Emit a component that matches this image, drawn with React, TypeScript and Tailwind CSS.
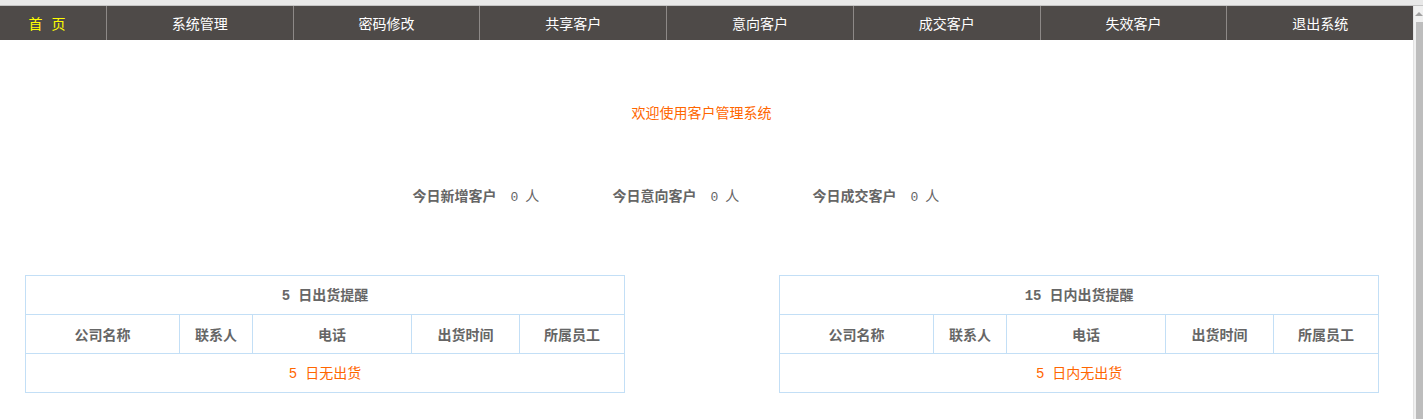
import React from 'react';

const NAV = ['系统管理', '密码修改', '共享客户', '意向客户', '成交客户', '失效客户', '退出系统'];

const STATS = [
  { label: '今日新增客户', value: 0 },
  { label: '今日意向客户', value: 0 },
  { label: '今日成交客户', value: 0 },
];

const COLS = [
  { name: '公司名称', w: 'w-[154px]' },
  { name: '联系人', w: 'w-[73px]' },
  { name: '电话', w: 'w-[159px]' },
  { name: '出货时间', w: 'w-[108px]' },
  { name: '所属员工', w: 'w-[105px]' },
];

const font = { fontFamily: '"Noto Sans CJK SC", "Liberation Sans", sans-serif' };

const RemindTable: React.FC<{ days: string; title: string; empty: string }> = ({ days, title, empty }) => (
  <table className="w-[599px] table-fixed border-collapse text-[14px] text-[#666666]">
    <colgroup>
      {COLS.map((c) => (
        <col key={c.name} className={c.w} />
      ))}
    </colgroup>
    <tbody>
      <tr className="h-[39px]">
        <td colSpan={5} className="border border-[#c3dff6] text-center font-bold">
          <span className="mr-[8px] font-['Liberation_Mono',monospace]">{days}</span>
          {title}
        </td>
      </tr>
      <tr className="h-[39px]">
        {COLS.map((c) => (
          <td key={c.name} className="border border-[#c3dff6] text-center font-bold">
            {c.name}
          </td>
        ))}
      </tr>
      <tr className="h-[39px]">
        <td colSpan={5} className="border border-[#c3dff6] text-center text-[#ff6600]">
          <span className="mr-[8px] font-['Liberation_Mono',monospace]">5</span>
          {empty}
        </td>
      </tr>
    </tbody>
  </table>
);

export default function App() {
  return (
    <div className="w-[1423px] h-[419px] overflow-hidden bg-white flex flex-col" style={font}>
      {/* browser chrome edge */}
      <div className="h-[6px] shrink-0 bg-[#e8e8e8] border-b border-[#c4c4c4]" />

      <div className="flex flex-1 min-h-0">
        <div className="flex-1 flex flex-col">
          {/* nav */}
          <div className="h-[34px] shrink-0 flex bg-[#4e4a48] text-[14px] text-white">
            <div className="w-[106px] flex items-center justify-center gap-[9px] pr-[12px] text-[#ffff00]">
              <span>首</span>
              <span>页</span>
            </div>
            {NAV.map((n) => (
              <div
                key={n}
                className="flex-1 flex items-center justify-center border-l border-[#8d8987]"
              >
                {n}
              </div>
            ))}
          </div>

          <div className="mt-[62px] mr-[10px] text-center text-[14px] leading-[20px] text-[#ff6600]">
            欢迎使用客户管理系统
          </div>

          <div className="mt-[63px] flex justify-center text-[14px] leading-[20px] text-[#666666]">
            {STATS.map((s) => (
              <div key={s.label} className="w-[200px] pl-[6px]">
                <span className="font-bold">{s.label}</span>
                <span className="ml-[14px] font-['Liberation_Mono',monospace] text-[13px]">{s.value}</span>
                <span className="ml-[7px]">人</span>
              </div>
            ))}
          </div>

          <div className="mt-[67px] flex pl-[25px] gap-[154px]">
            <RemindTable days="5" title="日出货提醒" empty="日无出货" />
            <RemindTable days="15" title="日内出货提醒" empty="日内无出货" />
          </div>
        </div>

        {/* scrollbar */}
        <div className="w-[10px] shrink-0 flex flex-col bg-[#f0f0f0] border-l border-[#e2e2e2]">
          <div className="h-[16px] flex items-center justify-center">
            <div className="w-0 h-0 border-l-[4px] border-r-[4px] border-b-[4px] border-l-transparent border-r-transparent border-b-[#a0a0a0]" />
          </div>
          <div className="flex-1 ml-[2px] bg-[#bdbdbd]" />
        </div>
      </div>
    </div>
  );
}
